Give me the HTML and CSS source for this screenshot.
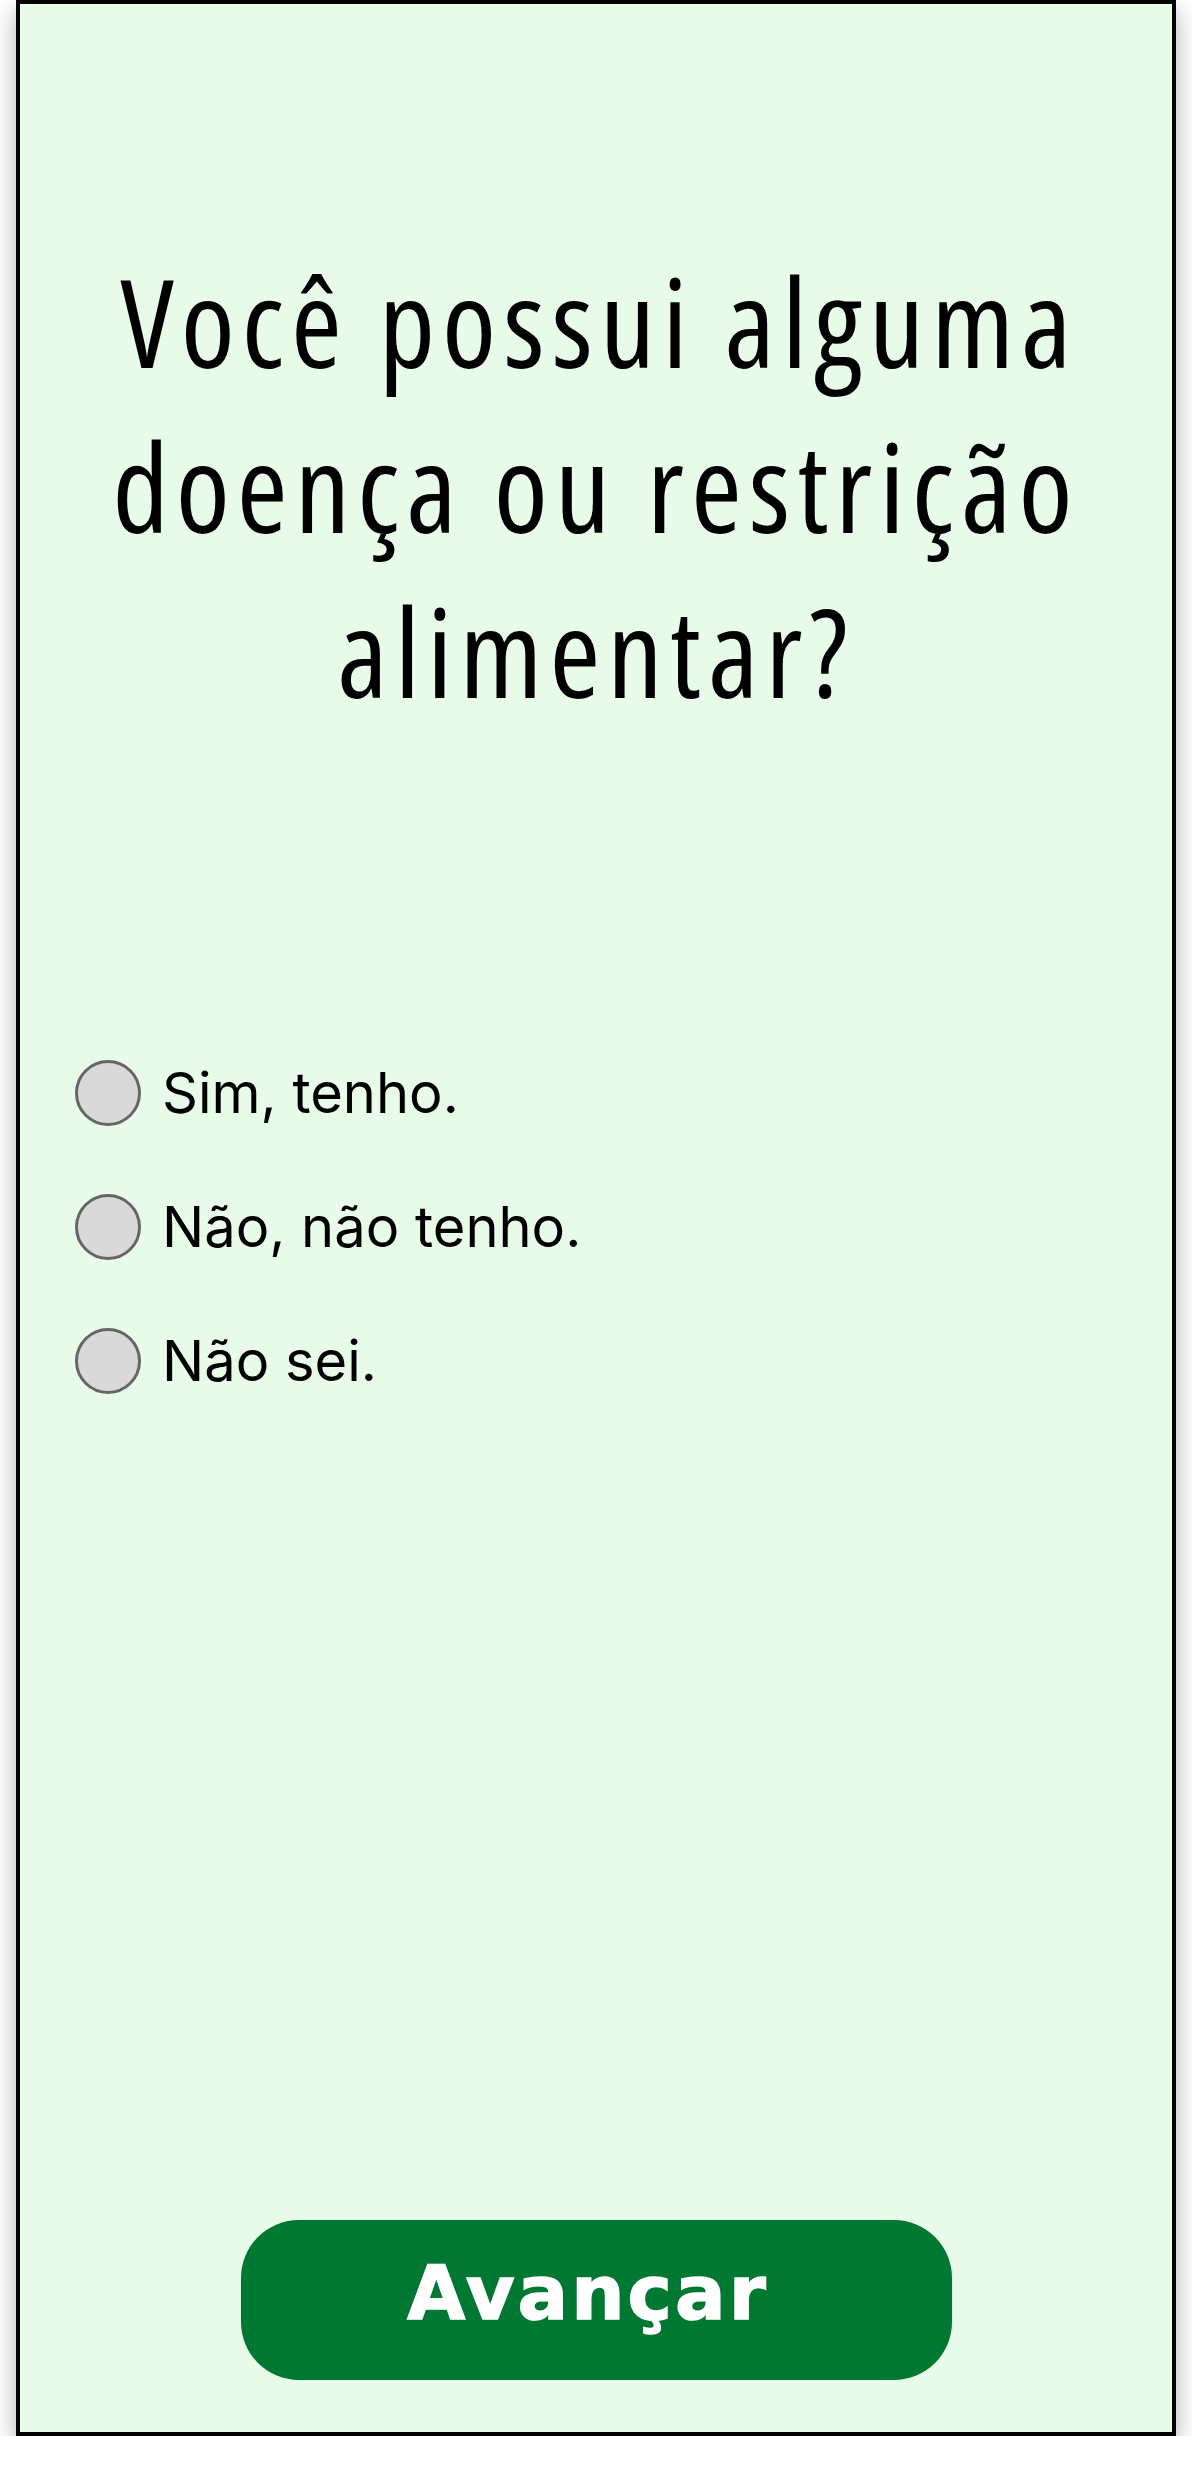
FILE: index.html
```html
<!DOCTYPE html>
<html lang="pt-BR">
<head>
<meta charset="utf-8">
<title>Restrição alimentar</title>
<link rel="stylesheet" href="styles.css">
</head>
<body>
<main class="screen">
  <h1 class="question">Você possui alguma<br>doença ou restrição<br>alimentar?</h1>
  <ul class="options">
    <li class="option"><span class="radio"></span><span class="label">Sim, tenho.</span></li>
    <li class="option"><span class="radio"></span><span class="label">Não, não tenho.</span></li>
    <li class="option"><span class="radio"></span><span class="label">Não sei.</span></li>
  </ul>
  <button class="next" type="button">Avançar</button>
</main>
</body>
</html>
```

FILE: styles.css
```css
html, body {
  margin: 0;
  padding: 0;
  background: #ffffff;
}

.screen {
  box-sizing: border-box;
  width: 1160px;
  height: 2436px;
  margin-left: 16px;
  border: 4px solid #000000;
  background: #e8fbe8;
  box-shadow: 0 10px 22px rgba(0, 0, 0, 0.32);
  display: flex;
  flex-direction: column;
}

.question {
  margin: 234px 0 0;
  font-family: "Open Sans", "DejaVu Sans Condensed", sans-serif;
  font-stretch: 82%;
  font-weight: 380;
  font-size: 123px;
  line-height: 165px;
  text-align: center;
  color: #000000;
  letter-spacing: 7px;
  text-indent: 7px;
  white-space: nowrap;
}

.options {
  list-style: none;
  margin: 327px 0 0;
  padding: 0 0 0 55px;
  display: flex;
  flex-direction: column;
  gap: 68px;
}

.option {
  display: flex;
  align-items: center;
  gap: 21px;
  height: 66px;
}

.radio {
  box-sizing: border-box;
  width: 66px;
  height: 66px;
  border-radius: 50%;
  border: 3px solid #666666;
  background: #d9d9d9;
  flex: none;
}

.label {
  font-family: Inter, "Noto Sans", sans-serif;
  font-size: 56px;
  color: #000000;
}

.next {
  margin: auto auto 52px;
  width: 711px;
  height: 160px;
  border: none;
  border-radius: 58px;
  background: #017832;
  color: #ffffff;
  font-family: "DejaVu Sans", sans-serif;
  font-weight: 700;
  font-size: 75px;
  letter-spacing: 3px;
  -webkit-text-stroke: 1.5px #ffffff;
  padding: 0 16px 14px 0;
}
```
